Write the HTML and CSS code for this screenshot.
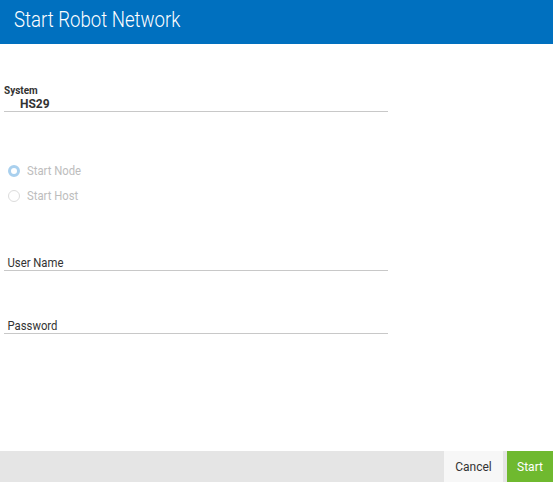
FILE: index.html
```html
<!DOCTYPE html>
<html>
<head>
<meta charset="utf-8">
<link rel="stylesheet" href="styles.css">
</head>
<body>
<div class="dialog">
  <div class="header"><span class="title">Start Robot Network</span></div>
  <div class="content">
    <div class="field system">
      <div class="sys-label">System</div>
      <div class="sys-value">HS29</div>
    </div>
    <div class="radios">
      <label class="radio"><span class="dot checked"></span><span class="rtext">Start Node</span></label>
      <label class="radio"><span class="dot"></span><span class="rtext">Start Host</span></label>
    </div>
    <div class="field input user">
      <span class="in-label">User Name</span>
    </div>
    <div class="field input pass">
      <span class="in-label">Password</span>
    </div>
  </div>
  <div class="footer">
    <button class="btn cancel">Cancel</button>
    <button class="btn start">Start</button>
  </div>
</div>
</body>
</html>
```
FILE: styles.css
```css
html, body {
  margin: 0;
  padding: 0;
  background: #ffffff;
}
body {
  font-family: Roboto, "Liberation Sans", sans-serif;
}
.dialog {
  width: 553px;
  height: 483px;
  display: flex;
  flex-direction: column;
}
.header {
  height: 44px;
  background: #0070bf;
  color: #ffffff;
  padding-left: 14px;
  box-sizing: border-box;
  line-height: 39px;
}
.title {
  display: inline-block;
  font-size: 22px;
  font-weight: 300;
  transform: scaleX(0.845);
  transform-origin: left center;
  white-space: nowrap;
}
.content {
  flex: 1;
  padding: 0 165px 0 4px;
}
.field {
  border-bottom: 1px solid #c8c8c8;
}
.system {
  margin-top: 41px;
}
.sys-label {
  font-size: 10px;
  font-weight: 700;
  color: #333333;
  line-height: 12px;
}
.sys-value {
  font-size: 12px;
  font-weight: 700;
  color: #333333;
  padding-left: 16px;
  line-height: 14px;
}
.radios {
  margin-top: 50px;
  display: flex;
  flex-direction: column;
  gap: 8px;
  padding-left: 4px;
}
.radio {
  display: flex;
  align-items: center;
  height: 17px;
  color: #bdbdbd;
}
.rtext {
  display: inline-block;
  font-size: 13px;
  transform: scaleX(0.87);
  transform-origin: left center;
  white-space: nowrap;
}
.dot {
  width: 12px;
  height: 12px;
  box-sizing: border-box;
  border-radius: 50%;
  border: 1px solid #dcdcdc;
  margin-right: 7px;
}
.dot.checked {
  border: 3px solid #a9d0ee;
}
.input {
  line-height: 14px;
  height: 14px;
}
.in-label {
  display: inline-block;
  font-size: 13px;
  color: #333333;
  padding-left: 4px;
  line-height: 14px;
  vertical-align: top;
  transform: scaleX(0.87);
  transform-origin: left center;
  white-space: nowrap;
}
.user {
  margin-top: 52px;
}
.pass {
  margin-top: 48px;
}
.footer {
  height: 31px;
  margin-bottom: 1px;
  background: #e5e5e5;
  display: flex;
  justify-content: flex-end;
  gap: 4px;
}
.btn {
  border: none;
  font-family: Roboto, "Liberation Sans", sans-serif;
  font-size: 12px;
  padding: 0;
  cursor: pointer;
}
.cancel {
  width: 59px;
  background: #f7f7f7;
  color: #333333;
}
.start {
  width: 46px;
  background: #6fb92f;
  color: #ffffff;
}
```
